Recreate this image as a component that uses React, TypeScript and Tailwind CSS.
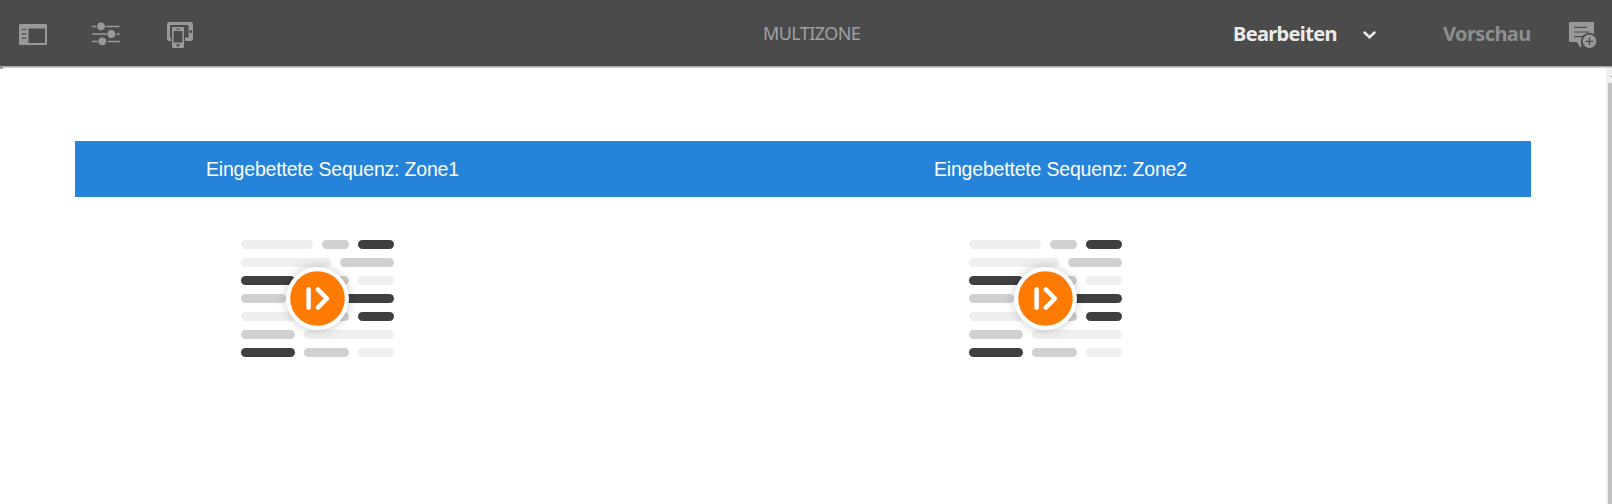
function RailIcon() {
  return (
    <svg width="28" height="21" viewBox="0 0 28 21" className="block">
      <path fill="#999" fillRule="evenodd" d="M1 0h26a1 1 0 0 1 1 1v19a1 1 0 0 1-1 1H1a1 1 0 0 1-1-1V1a1 1 0 0 1 1-1zM9.5 4.5v14.500h16.500V4.500z" />
      <path stroke="#4b4b4b" strokeWidth="1.1" strokeLinecap="round" d="M3 5.5h4M3 9.900h4M3 14.300h4" />
    </svg>
  );
}

function SlidersIcon() {
  return (
    <svg width="28" height="24" viewBox="0 0 28 24" className="block" fill="#999">
      <path stroke="#999" strokeWidth="1.7" strokeLinecap="round" d="M1 4.500h2.500M14.500 4.500H27M1 12h13.500M25 12h2M1 19.500h4M16.500 19.500H27" />
      <circle cx="9" cy="4.300" r="3.900" />
      <circle cx="19.300" cy="12" r="3.900" />
      <circle cx="10.300" cy="19.300" r="3.900" />
    </svg>
  );
}

function DevicesIcon() {
  return (
    <svg width="26" height="26" viewBox="0 0 26 26" className="block">
      <path fill="#999" fillRule="evenodd" d="M2 0h22a2 2 0 0 1 2 2v15a2 2 0 0 1-2 2H2a2 2 0 0 1-2-2V2a2 2 0 0 1 2-2zM3 3v12.500h18.500V3z" />
      <path fill="#4b4b4b" d="M4 4.500h14V26H4z" />
      <circle cx="23.700" cy="9.500" r="1.600" fill="#4b4b4b" />
      <path fill="#999" fillRule="evenodd" d="M6.300 5h9.400A1.300 1.300 0 0 1 17 6.300v18.400a1.300 1.300 0 0 1-1.300 1.300H6.300A1.300 1.300 0 0 1 5 24.700V6.300A1.300 1.300 0 0 1 6.300 5zM6.600 9v11.500h8.800V9z" />
      <path stroke="#4b4b4b" strokeWidth="1.2" d="M9.500 7.100h3" />
      <circle cx="11" cy="23.300" r="1.400" fill="#4b4b4b" />
    </svg>
  );
}

function AnnotateIcon() {
  return (
    <svg width="28" height="27" viewBox="0 0 28 27" className="block">
      <path fill="#999" d="M1 0h23a1 1 0 0 1 1 1v19H1a1 1 0 0 1-1-1V1a1 1 0 0 1 1-1z" />
      <path stroke="#4b4b4b" strokeWidth="1.2" strokeLinecap="round" d="M5.500 5.400h12M5.500 10h14M5.500 14.700h8" />
      <circle cx="20.500" cy="19.300" r="8.600" fill="#4b4b4b" />
      <path fill="#999" d="M7.500 19.500h4.300q.2 3 .7 5.500h-1.700z" />
      <circle cx="20.500" cy="19.300" r="6.800" fill="#999" />
      <path stroke="#4b4b4b" strokeWidth="1.200" d="M16.700 19.300h7.600M20.500 15.500v7.600" />
    </svg>
  );
}

const light = "#eeeeee";
const mid = "#d0d0d0";
const dark = "#404040";

const bars: [number, number, number, string][] = [
  [0, 0, 72, light], [81, 0, 27, mid], [117, 0, 36, dark],
  [0, 18, 90, light], [99, 18, 54, mid],
  [0, 36, 54, dark], [81, 36, 27, mid], [117, 36, 36, light],
  [0, 54, 45, mid], [90, 54, 63, dark],
  [0, 72, 72, light], [81, 72, 27, mid], [117, 72, 36, dark],
  [0, 90, 54, mid], [63, 90, 90, light],
  [0, 108, 54, dark], [63, 108, 45, mid], [117, 108, 36, light],
];

function SequenceArt() {
  return (
    <svg width="153" height="117" viewBox="0 0 153 117" className="block overflow-visible">
      {bars.map(([x, y, w, color]) => (
        <rect key={`${x}-${y}`} x={x} y={y} width={w} height="9" rx="4.5" fill={color} />
      ))}
      <circle cx="76.5" cy="58.500" r="31.500" fill="#fff" className="drop-shadow-[0_0_5px_rgba(0,0,0,0.22)]" />
      <circle cx="76.500" cy="58.500" r="27.300" fill="#ff7a00" />
      <path fill="none" stroke="#fff" strokeWidth="4.500" strokeLinecap="round" strokeLinejoin="round" d="M67.600 49.300v18.400M76.800 49.300L86 58.500l-9.200 9.200" />
    </svg>
  );
}

function Zone({ name }: { name: string }) {
  return (
    <section className="w-[728px]">
      <h2 className="flex h-14 items-center bg-[#2683da] pt-0.5 pl-[131px] text-[19.5px] tracking-[-0.19px] text-white">
        Eingebettete Sequenz: {name}
      </h2>
      <div className="pt-[43px] pl-[166px]">
        <SequenceArt />
      </div>
    </section>
  );
}

export default function App() {
  return (
    <div className="flex h-[504px] w-[1612px] flex-col overflow-hidden bg-white font-['Liberation_Sans',Arial,sans-serif]">
      <header className="grid h-[66px] shrink-0 grid-cols-[763px_1fr_auto] items-center bg-[#4b4b4b] font-['Noto_Sans',sans-serif]">
        <div className="flex items-center pt-0.5 pl-[19px]">
          <div className="pt-px"><RailIcon /></div>
          <div className="ml-[45px]"><SlidersIcon /></div>
          <div className="ml-[47px] pt-0.5"><DevicesIcon /></div>
        </div>
        <h1 className="text-[18px] tracking-[-0.6px] text-[#a0a0a0]">MULTIZONE</h1>
        <div className="flex items-center pr-[15px] text-[20px] font-bold">
          <span className="w-[130px] pt-0.5 tracking-[-0.65px] text-[#ebebeb]">Bearbeiten</span>
          <svg width="13" height="8" viewBox="0 0 13 8" className="mt-[3px] block">
            <path d="M1.500 1.500l5 4.700 5-4.700" fill="none" stroke="#ebebeb" strokeWidth="2.500" strokeLinecap="round" />
          </svg>
          <span className="ml-[67px] w-[126px] pt-0.5 tracking-[-0.6px] text-[#8e8e8e]">Vorschau</span>
          <div className="pt-[5px]"><AnnotateIcon /></div>
        </div>
      </header>
      <div className="flex flex-1">
        <div className="flex-1">
          <div className="h-px bg-[#a8a4a4]" />
          <div className="flex h-px bg-[#d0cece]"><div className="w-[3px] bg-[#959191]" /></div>
          <div className="h-px w-[3px] bg-[#a8a4a4]" />
          <main className="flex pt-[72px] pl-[75px]">
            <Zone name="Zone1" />
            <Zone name="Zone2" />
          </main>
        </div>
        <div className="flex w-1.5 flex-col bg-[#f0f0f0]">
          <div className="h-px bg-[#a8a4a4]" />
          <div className="h-px bg-[#d0cece]" />
          <div className="mt-2 ml-[5px] h-px bg-[#777]" />
          <div className="mt-1.5 ml-0.5 flex-1 bg-[#c1c1c1]" />
        </div>
      </div>
    </div>
  );
}
